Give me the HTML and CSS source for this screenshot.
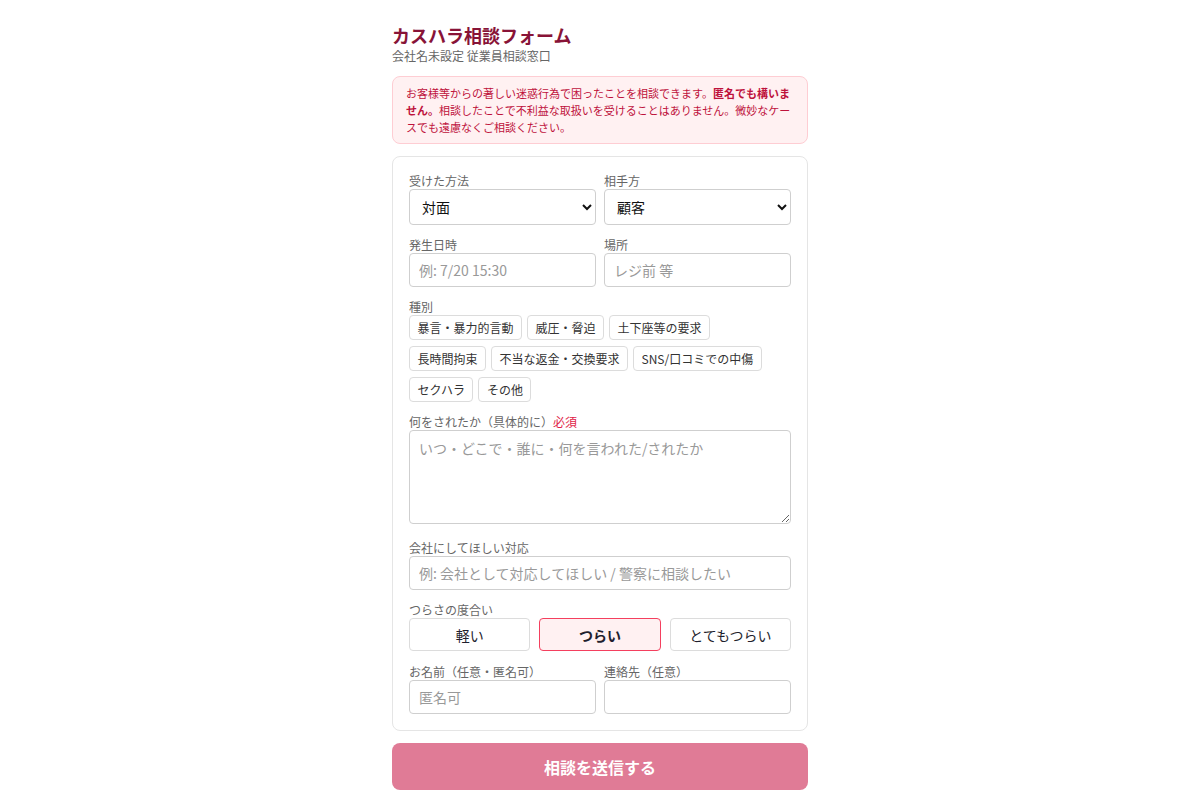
FILE: index.html
```html
<!DOCTYPE html>
<html lang="ja">
<head>
<meta charset="utf-8">
<title>カスハラ相談フォーム</title>
<link rel="stylesheet" href="styles.css">
</head>
<body>
<main class="page">
  <h1 class="title">カスハラ相談フォーム</h1>
  <p class="subtitle">会社名未設定 従業員相談窓口</p>
  <div class="notice">お客様等からの著しい迷惑行為で困ったことを相談できます。<strong>匿名でも構いません。</strong>相談したことで不利益な取扱いを受けることはありません。微妙なケースでも遠慮なくご相談ください。</div>

  <form class="card">
    <div class="row two">
      <div class="field">
        <label class="label">受けた方法</label>
        <select class="control select"><option>対面</option><option>電話</option><option>メール</option></select>
      </div>
      <div class="field">
        <label class="label">相手方</label>
        <select class="control select"><option>顧客</option><option>取引先</option></select>
      </div>
    </div>

    <div class="row two">
      <div class="field">
        <label class="label">発生日時</label>
        <input class="control input" placeholder="例: 7/20 15:30">
      </div>
      <div class="field">
        <label class="label">場所</label>
        <input class="control input" placeholder="レジ前 等">
      </div>
    </div>

    <div class="row">
      <label class="label">種別</label>
      <div class="chips">
        <button type="button" class="chip">暴言・暴力的言動</button>
        <button type="button" class="chip">威圧・脅迫</button>
        <button type="button" class="chip">土下座等の要求</button>
        <button type="button" class="chip">長時間拘束</button>
        <button type="button" class="chip">不当な返金・交換要求</button>
        <button type="button" class="chip">SNS/口コミでの中傷</button>
        <button type="button" class="chip">セクハラ</button>
        <button type="button" class="chip">その他</button>
      </div>
    </div>

    <div class="row row-textarea">
      <label class="label">何をされたか（具体的に）<span class="req">必須</span></label>
      <textarea class="control textarea" placeholder="いつ・どこで・誰に・何を言われた/されたか"></textarea>
    </div>

    <div class="row">
      <label class="label">会社にしてほしい対応</label>
      <input class="control input" placeholder="例: 会社として対応してほしい / 警察に相談したい">
    </div>

    <div class="row">
      <label class="label">つらさの度合い</label>
      <div class="levels">
        <button type="button" class="level">軽い</button>
        <button type="button" class="level active">つらい</button>
        <button type="button" class="level">とてもつらい</button>
      </div>
    </div>

    <div class="row two row-names">
      <div class="field">
        <label class="label">お名前（任意・匿名可）</label>
        <input class="control input" placeholder="匿名可">
      </div>
      <div class="field">
        <label class="label">連絡先（任意）</label>
        <input class="control input">
      </div>
    </div>
  </form>

  <button type="button" class="submit">相談を送信する</button>
</main>
</body>
</html>
```

FILE: styles.css
```css
* { box-sizing: border-box; }

html, body {
  margin: 0;
  background: #ffffff;
  font-family: "Noto Sans CJK JP", "Noto Sans", sans-serif;
  color: #222;
}

.page {
  width: 416px;
  margin: 0 auto;
  padding-top: 23px;
}

.title {
  margin: 0;
  font-size: 18px;
  line-height: 24px;
  font-weight: 700;
  color: #881337;
}

.subtitle {
  margin: 1px 0 0;
  font-size: 12px;
  line-height: 16px;
  color: #666;
}

.notice {
  margin-top: 12px;
  padding: 8px 13px 7px;
  background: #fff1f2;
  border: 1px solid #fecdd3;
  border-radius: 8px;
  font-size: 11px;
  line-height: 17px;
  color: #be123c;
}

.notice strong {
  font-weight: 700;
  color: #be123c;
}

.card {
  margin-top: 12px;
  padding: 16px;
  border: 1px solid #e5e5e5;
  border-radius: 8px;
  background: #fff;
}

.row { margin-top: 12px; }
.row:first-child { margin-top: 0; }
.row-textarea { padding-bottom: 4px; }
.row-names { margin-top: 13px; }

.two {
  display: grid;
  grid-template-columns: 1fr 1fr;
  gap: 8px;
}

.field { min-width: 0; }

.label {
  display: block;
  font-size: 12px;
  line-height: 16px;
  color: #666;
}

.req { color: #e11d48; }

.control {
  display: block;
  width: 100%;
  border: 1px solid #cfcfcf;
  border-radius: 4px;
  background: #fff;
  font-family: "Noto Sans CJK JP", "Noto Sans", sans-serif;
  font-size: 14px;
  color: #111;
}

.control::placeholder { color: #999; }

.select {
  height: 36px;
  padding: 0 6px 0 8px;
}

.input {
  height: 34px;
  padding: 0 9px;
}

.textarea {
  height: 94px;
  padding: 7px 9px;
  line-height: 20px;
  resize: vertical;
}

.chips {
  display: flex;
  flex-wrap: wrap;
  gap: 6px 5px;
}

.chip {
  height: 25px;
  padding: 0 7.5px;
  border: 1px solid #dcdcdc;
  border-radius: 4px;
  background: #fff;
  font-family: "Noto Sans CJK JP", "Noto Sans", sans-serif;
  font-size: 12px;
  color: #333;
  cursor: pointer;
}

.levels {
  display: grid;
  grid-template-columns: repeat(3, 1fr);
  gap: 9px;
}

.level {
  height: 33px;
  border: 1px solid #dcdcdc;
  border-radius: 4px;
  background: #fff;
  font-family: "Noto Sans CJK JP", "Noto Sans", sans-serif;
  font-size: 14px;
  color: #1f1f2e;
  cursor: pointer;
}

.level.active {
  border-color: #f43f5e;
  background: #fff1f2;
  font-weight: 700;
}

.submit {
  display: block;
  width: 100%;
  height: 47px;
  margin-top: 12px;
  border: 0;
  border-radius: 8px;
  background: #e07b96;
  color: #fff;
  font-family: "Noto Sans CJK JP", "Noto Sans", sans-serif;
  font-size: 16px;
  font-weight: 700;
  cursor: pointer;
}
```
